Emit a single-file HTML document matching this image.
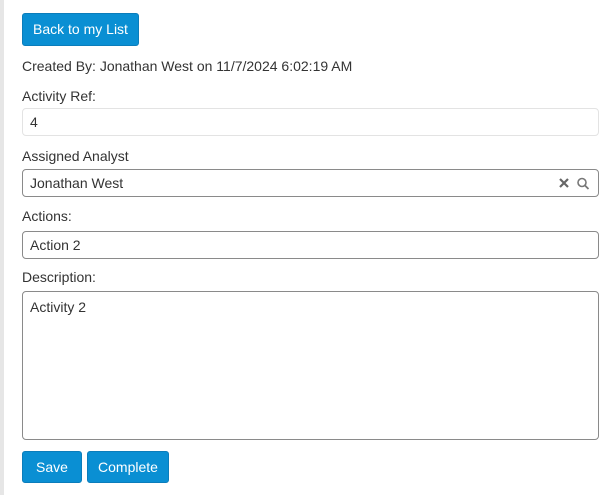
<!DOCTYPE html>
<html><head><style>
body{margin:0;width:611px;height:495px;background:#fff;font-family:"Liberation Sans",sans-serif;font-size:14px;color:#333;position:relative;overflow:hidden}
.strip{position:absolute;left:0;top:0;width:4px;height:495px;background:#e6e6e6}
.a{position:absolute}
.btn{position:absolute;background:#0a8fd3;border:1px solid #0b7dbb;border-radius:3px;color:#fff;font-size:14px;text-align:center;box-sizing:border-box}
.inp{position:absolute;left:22px;width:577px;box-sizing:border-box;border:1px solid #8a8a8a;border-radius:4px;background:#fff;padding-left:7px}
</style></head><body>
<div class="strip"></div>
<div class="btn" style="left:22px;top:13px;width:117px;height:33px;line-height:31px">Back to my List</div>
<div class="a" style="left:22px;top:58px">Created By: Jonathan West on 11/7/2024 6:02:19 AM</div>
<div class="a" style="left:22px;top:88px">Activity Ref:</div>
<div class="inp" style="top:108px;height:28px;line-height:26px;border-color:#e3e3e3">4</div>
<div class="a" style="left:22px;top:148px">Assigned Analyst</div>
<div class="inp" style="top:169px;height:28px;line-height:26px">Jonathan West
<svg style="position:absolute;right:6px;top:7px" width="34" height="13" viewBox="0 0 34 13"><path d="M2 2l8 8M10 2l-8 8" stroke="#666" stroke-width="2.2"/><circle cx="24" cy="5.5" r="4" fill="none" stroke="#777" stroke-width="1.6"/><path d="M27 8.5l3.5 3.5" stroke="#777" stroke-width="1.8"/></svg></div>
<div class="a" style="left:22px;top:208px">Actions:</div>
<div class="inp" style="top:231px;height:28px;line-height:26px">Action 2</div>
<div class="a" style="left:22px;top:269px">Description:</div>
<div class="inp" style="top:291px;height:149px;padding-top:7px">Activity 2</div>
<div class="btn" style="left:22px;top:451px;width:60px;height:32px;line-height:30px">Save</div>
<div class="btn" style="left:87px;top:451px;width:82px;height:32px;line-height:30px">Complete</div>
</body></html>
